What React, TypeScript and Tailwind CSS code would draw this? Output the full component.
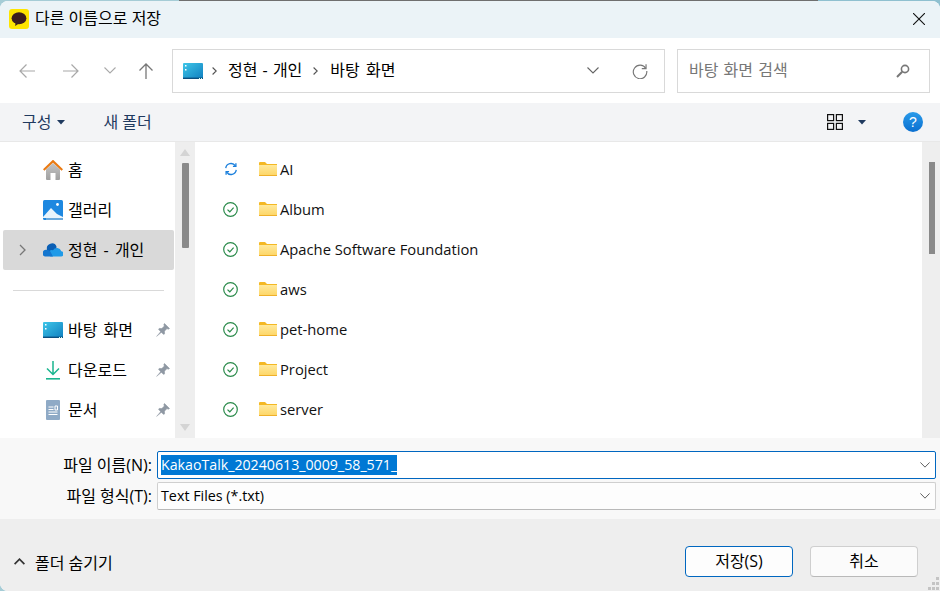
import React from "react";

const font = { fontFamily: '"Open Sans","Noto Sans CJK KR",sans-serif' };

function Kakao() {
  return (
    <svg width="20" height="20" viewBox="0 0 20 20">
      <rect width="20" height="20" rx="3" fill="#fee500" />
      <ellipse cx="10" cy="9.2" rx="7.4" ry="6" fill="#3c1e1e" />
      <path d="M6.5 13.5 L6.2 17 L10 14.5Z" fill="#3c1e1e" />
    </svg>
  );
}

function Desktop({ id }: { id: string }) {
  return (
    <svg width="20" height="16" viewBox="0 0 20 16">
      <defs>
        <linearGradient id={id} x1="0" y1="0" x2="1" y2="1">
          <stop offset="0" stopColor="#3fc6e8" />
          <stop offset="1" stopColor="#0f7fc0" />
        </linearGradient>
      </defs>
      <rect width="20" height="16" rx="1" fill={`url(#${id})`} />
      <rect y="14.6" width="20" height="1.4" fill="#0b4f80" />
      <rect x="2" y="2" width="1.5" height="1.5" fill="#fff" />
      <rect x="2" y="6" width="1.5" height="1.5" fill="#fff" />
      <rect x="16" y="15" width="1" height="1" fill="#cfe" />
      <rect x="18" y="15" width="1" height="1" fill="#cfe" />
    </svg>
  );
}

function Home() {
  return (
    <svg width="20" height="20" viewBox="0 0 20 20">
      <defs>
        <linearGradient id="hm" x1="0" y1="0" x2="0" y2="1">
          <stop offset="0" stopColor="#c4c4c4" />
          <stop offset="1" stopColor="#a0a0a0" />
        </linearGradient>
      </defs>
      <path d="M3 9.5 L10 3 L17 9.5 V19 a1 1 0 0 1-1 1 H12.5 V13 H7.5 V20 H4 a1 1 0 0 1-1-1Z" fill="url(#hm)" />
      <path d="M0.7 10 L10 1.2 L19.3 10" fill="none" stroke="#ea7a12" strokeWidth="2.2" />
    </svg>
  );
}

function Gallery() {
  return (
    <svg width="20" height="20" viewBox="0 0 20 20">
      <rect width="20" height="20" rx="1.5" fill="#1e88e0" />
      <rect x="3" y="17" width="17" height="3" fill="#6aa9dc" />
      <path d="M0 17 L8 8 L14 14 L20 17 V18 H0Z" fill="#e8f4fc" />
      <circle cx="14.5" cy="4.5" r="1.4" fill="#fff" />
    </svg>
  );
}

function Cloud() {
  return (
    <svg width="20" height="14" viewBox="0 0 20 14">
      <path d="M4 6.5 A5 5 0 0 1 13.5 3.5 L13 10 L2 9.5 A3 3 0 0 1 4 6.5Z" fill="#0b5fb5" />
      <path d="M7.5 13.5 H17.5 A2.6 2.6 0 0 0 18.3 8.2 A4.6 4.6 0 0 0 10 7.2 A3.4 3.4 0 0 0 7.5 13.5Z" fill="#1f9ae8" />
      <path d="M2 13.5 H10 L7 8 A3.5 3.5 0 0 0 4 7 A3.4 3.4 0 0 0 2 13.5Z" fill="#1476cf" />
    </svg>
  );
}

function Download() {
  return (
    <svg width="16" height="20" viewBox="0 0 16 20" fill="none">
      <path d="M8 1 V14 M2 8.5 L8 14.5 L14 8.5" stroke="#1ab58f" strokeWidth="1.5" />
      <rect x="1" y="18" width="14" height="1.6" fill="#1ab58f" />
    </svg>
  );
}

function Doc() {
  return (
    <svg width="14" height="20" viewBox="0 0 14 20">
      <rect width="14" height="20" rx="1" fill="#8faac6" />
      <path d="M2.5 7 H7.5 M2.5 9.5 H7.5 M2.5 12 H11.5 M2.5 14.5 H11.5 M9 6 H11.5 V10 H9Z" stroke="#fff" strokeWidth="1" fill="none" />
    </svg>
  );
}

function Pin() {
  return (
    <svg width="14" height="14" viewBox="0 0 14 14">
      <path d="M8.5 0.5 L13.5 5.5 L12.2 6.2 L11 5.6 L8.4 8.2 L8.6 10.8 L7.6 11.4 L2.6 6.4 L3.2 5.4 L5.8 5.6 L8.4 3 L7.8 1.8Z" fill="#8f98a3" stroke="#8f98a3" strokeWidth="0.6" />
      <path d="M5 8.2 L0.6 13.4 L5.8 9Z" fill="#8f98a3" stroke="#8f98a3" strokeWidth="0.4" />
    </svg>
  );
}

function Check() {
  return (
    <svg width="15" height="15" viewBox="0 0 15 15" fill="none">
      <circle cx="7.5" cy="7.5" r="6.8" stroke="#2a8a4a" strokeWidth="1.2" />
      <path d="M4.5 7.6 L6.8 9.8 L10.6 5.6" stroke="#2a8a4a" strokeWidth="1.2" />
    </svg>
  );
}

function Sync() {
  return (
    <svg width="14" height="14" viewBox="0 0 16 16" fill="none" stroke="#1a7fdc" strokeWidth="1.5">
      <path d="M2 7 A6 6 0 0 1 13 4.5" />
      <path d="M13.6 1.5 V5 H10.2" />
      <path d="M14 9 A6 6 0 0 1 3 11.5" />
      <path d="M2.4 14.5 V11 H5.8" />
    </svg>
  );
}

function Folder({ id }: { id: string }) {
  return (
    <svg width="18" height="14" viewBox="0 0 18 14">
      <defs>
        <linearGradient id={id} x1="0" y1="0" x2="0" y2="1">
          <stop offset="0" stopColor="#ffe99c" />
          <stop offset="1" stopColor="#fdd564" />
        </linearGradient>
      </defs>
      <path d="M0 1 a1 1 0 0 1 1-1 H6 L8 2 H18 V13 H0Z" fill="#f4b824" />
      <path d="M0 3 H18 V13 a1 1 0 0 1-1 1 H1 a1 1 0 0 1-1-1Z" fill={`url(#${id})`} />
      <rect y="13" width="18" height="1" fill="#efb02a" />
    </svg>
  );
}

function Chevron({ color = "#666", w = 12, h = 7 }: { color?: string; w?: number; h?: number }) {
  return (
    <svg width={w} height={h} viewBox="0 0 12 7" fill="none" stroke={color} strokeWidth="1.1" preserveAspectRatio="none">
      <path d="M0.5 0.5 L6 6 L11.5 0.5" />
    </svg>
  );
}

function Crumb() {
  return (
    <svg width="5" height="8" viewBox="0 0 5 8" fill="none" stroke="#555" strokeWidth="1.1">
      <path d="M0.6 0.5 L4.2 4 L0.6 7.5" />
    </svg>
  );
}

function Caret() {
  return (
    <svg width="8" height="5" viewBox="0 0 8 5">
      <path d="M0 0 H8 L4 4.5Z" fill="#1f3a5f" />
    </svg>
  );
}

function NavItem({ icon, label, pin, active, chev }: { icon: React.ReactNode; label: string; pin?: boolean; active?: boolean; chev?: boolean }) {
  return (
    <div className={`flex items-center h-10 w-[171px] ml-[3px] rounded-[2px] ${active ? "bg-[#d9d9d9]" : ""}`}>
      <div className="w-[13px] ml-[13px] flex justify-center">
        {chev && (
          <svg width="7" height="12" viewBox="0 0 7 12" fill="none" stroke="#777" strokeWidth="1.3">
            <path d="M1 1 L6 6 L1 11" />
          </svg>
        )}
      </div>
      <div className="w-5 ml-[14px] flex justify-center">{icon}</div>
      <span className="ml-[5px] text-[16px] [word-spacing:2px] text-black whitespace-nowrap flex-1">{label}</span>
      {pin && <span className="mr-[4px] flex"><Pin /></span>}
    </div>
  );
}

function FileRow({ name, sync, id }: { name: string; sync?: boolean; id: string }) {
  return (
    <div className="flex items-center h-10">
      <div className="w-[15px] ml-[28px] flex justify-center">{sync ? <Sync /> : <Check />}</div>
      <div className="ml-[21px] flex"><Folder id={id} /></div>
      <span className="ml-[3px] text-[14.75px] text-[#111]">{name}</span>
    </div>
  );
}

function ScrollArrow({ down }: { down?: boolean }) {
  return (
    <svg width="10" height="7" viewBox="0 0 10 7">
      <path d={down ? "M0 0 H10 L5 7Z" : "M0 7 H10 L5 0Z"} fill="#d4d4d4" />
    </svg>
  );
}

function Label({ text }: { text: string }) {
  return (
    <span className="w-[157px] ml-[-157px] pr-[5px] text-right text-[16px] text-black whitespace-nowrap">{text}</span>
  );
}

export default function App() {
  return (
    <div className="w-[940px] h-[591px] overflow-hidden bg-[linear-gradient(90deg,#a5ccd6_0,#a5ccd6_19%,#6f6f6f_19%,#6f6f6f_87%,#8fc0d0_87%)]" style={font}>
      <div className="relative h-[590px] mt-px rounded-t-lg rounded-bl-lg overflow-hidden flex flex-col bg-white">
        {/* Title bar */}
        <div className="h-[37px] shrink-0 bg-[#ebf3f7] flex items-center pl-[9px] pr-[15px] pb-px">
          <Kakao />
          <span className="ml-[6px] pb-[2px] text-[16px] text-black">다른 이름으로 저장</span>
          <svg className="ml-auto" width="12" height="12" viewBox="0 0 12 12" stroke="#111" strokeWidth="1.1">
            <path d="M0 0 L12 12 M12 0 L0 12" />
          </svg>
        </div>

        {/* Navigation */}
        <div className="h-[65px] shrink-0 bg-white flex items-center pl-[19px] pr-[10px]">
          <div className="flex items-center mr-[18px]">
            <svg width="16" height="16" viewBox="0 0 16 16" fill="none" stroke="#a8a8a8" strokeWidth="1.2">
              <path d="M16 8 H1 M7.5 1.5 L1 8 L7.5 14.5" />
            </svg>
            <svg className="ml-[28px]" width="16" height="16" viewBox="0 0 16 16" fill="none" stroke="#a8a8a8" strokeWidth="1.2">
              <path d="M0 8 H15 M8.5 1.5 L15 8 L8.5 14.5" />
            </svg>
            <span className="ml-[25px] flex"><Chevron color="#aaa" w={12} h={7} /></span>
            <svg className="ml-[22px]" width="16" height="16" viewBox="0 0 16 16" fill="none" stroke="#777" strokeWidth="1.3">
              <path d="M8 16 V1 M1.5 7.5 L8 1 L14.5 7.5" />
            </svg>
          </div>
          <div className="w-[493px] h-[44px] shrink-0 border border-[#d9d9d9] flex items-center pl-[10px] pr-[16px]">
            <Desktop id="d1" />
            <span className="ml-[9px] flex"><Crumb /></span>
            <span className="ml-[11px] pb-[2px] text-[16px] [word-spacing:1px] text-black">정현 - 개인</span>
            <span className="ml-[11px] flex"><Crumb /></span>
            <span className="ml-[12px] pb-[2px] text-[16px] [word-spacing:2px] text-black">바탕 화면</span>
            <span className="ml-auto flex"><Chevron color="#666" w={12} h={7} /></span>
            <svg className="ml-[33px]" width="16" height="16" viewBox="0 0 18 18" fill="none" stroke="#777" strokeWidth="1.3">
              <path d="M15.5 6 A7.6 7.6 0 1 0 16.6 9" />
              <path d="M15.8 1.5 V6.3 H11" />
            </svg>
          </div>
          <div className="ml-3 w-[253px] h-[44px] shrink-0 border border-[#d9d9d9] flex items-center pl-[11px] pr-[19px]">
            <span className="pb-[2px] text-[16px] [word-spacing:1px] text-[#777]">바탕 화면 검색</span>
            <svg className="ml-auto" width="14" height="14" viewBox="0 0 14 14" fill="none" stroke="#777">
              <circle cx="9" cy="5" r="3.6" strokeWidth="1.6" />
              <path d="M6.2 7.8 L1 13" strokeWidth="2" />
            </svg>
          </div>
        </div>

        {/* Toolbar */}
        <div className="h-[39px] shrink-0 bg-[#f3f4f6] border-b border-[#e8e8e8] flex items-center pl-[22px] pr-[17px]">
          <span className="text-[16px] text-[#1f3a5f]">구성</span>
          <span className="ml-[6px] flex"><Caret /></span>
          <span className="ml-[38px] text-[16px] text-[#1f3a5f]">새 폴더</span>
          <svg className="ml-auto" width="16" height="16" viewBox="0 0 16 16" fill="none" stroke="#111" strokeWidth="1.2">
            <rect x="0.6" y="0.6" width="6" height="6" />
            <rect x="9.4" y="0.6" width="6" height="6" />
            <rect x="0.6" y="9.4" width="6" height="6" />
            <rect x="9.4" y="9.4" width="6" height="6" />
          </svg>
          <span className="ml-[15px] flex"><Caret /></span>
          <svg className="ml-[37px]" width="20" height="20" viewBox="0 0 20 20">
            <defs>
              <linearGradient id="hlp" x1="0" y1="0" x2="0" y2="1">
                <stop offset="0" stopColor="#2a9bea" />
                <stop offset="1" stopColor="#0a6fd0" />
              </linearGradient>
            </defs>
            <circle cx="10" cy="10" r="10" fill="url(#hlp)" />
            <text x="10" y="15" textAnchor="middle" fontSize="14" fill="#fff" fontFamily="Liberation Sans">?</text>
          </svg>
        </div>

        {/* Main */}
        <div className="h-[296px] shrink-0 flex bg-white">
          <div className="w-[175px] shrink-0 pt-[8px]">
            <NavItem icon={<Home />} label="홈" />
            <NavItem icon={<Gallery />} label="갤러리" />
            <NavItem icon={<Cloud />} label="정현 - 개인" active chev />
            <div className="h-10 flex items-center ml-[13px] mr-[11px]">
              <div className="h-px w-full bg-[#d9d9d9]" />
            </div>
            <NavItem icon={<Desktop id="d2" />} label="바탕 화면" pin />
            <NavItem icon={<Download />} label="다운로드" pin />
            <NavItem icon={<Doc />} label="문서" pin />
          </div>
          <div className="w-5 shrink-0 bg-[#eeeeee] flex flex-col items-center py-[7px]">
            <ScrollArrow />
            <div className="w-[7px] h-[85px] mt-[7px] bg-[#8a8a8a] rounded-[1px]" />
            <div className="flex-1" />
            <ScrollArrow down />
          </div>
          <div className="flex-1 pt-[7px] overflow-hidden">
            <FileRow id="f1" name="AI" sync />
            <FileRow id="f2" name="Album" />
            <FileRow id="f3" name="Apache Software Foundation" />
            <FileRow id="f4" name="aws" />
            <FileRow id="f5" name="pet-home" />
            <FileRow id="f6" name="Project" />
            <FileRow id="f7" name="server" />
          </div>
          <div className="w-[18px] shrink-0 bg-[#eeeeee] flex justify-center pl-px pt-[20px]">
            <div className="w-[6px] h-[92px] bg-[#8a8a8a]" />
          </div>
        </div>

        {/* Form */}
        <div className="h-[81px] shrink-0 bg-[#f8f8f8] flex flex-col gap-[3px] pt-[13px] pl-[157px] pr-[4px]">
          <div className="flex items-center h-[28px]">
            <Label text="파일 이름(N):" />
            <div className="flex-1 h-[28px] bg-white border border-[#0067c0] rounded-[2px] flex items-center pl-[3px] pr-[5px]">
              <span className="text-[14.2px] bg-[#0078d4] text-white leading-[20px] whitespace-nowrap">KakaoTalk_20240613_0009_58_571_</span>
              <span className="ml-auto flex"><Chevron color="#555" w={10} h={6} /></span>
            </div>
          </div>
          <div className="flex items-center h-[28px]">
            <Label text="파일 형식(T):" />
            <div className="flex-1 h-[28px] bg-[#fdfdfd] border border-[#cfcfcf] border-b-[#b9b9b9] rounded-[2px] flex items-center pl-[3px] pr-[5px]">
              <span className="text-[14.3px] text-black">Text Files (*.txt)</span>
              <span className="ml-auto flex"><Chevron color="#555" w={10} h={6} /></span>
            </div>
          </div>
        </div>

        {/* Footer */}
        <div className="flex-1 bg-[#eeeeee] flex items-end pb-[14px] pl-[14px] pr-[22px]">
          <div className="flex items-center h-[31px]">
            <svg width="11" height="7" viewBox="0 0 11 7" fill="none" stroke="#333" strokeWidth="1.7">
              <path d="M0.6 6.2 L5.5 1.2 L10.4 6.2" />
            </svg>
            <span className="ml-[10px] pt-[2px] text-[16px] text-black">폴더 숨기기</span>
          </div>
          <button className="ml-auto w-[108px] h-[31px] pb-px rounded-[4px] border border-[#0067c0] bg-[#fdfdfd] text-[16px] text-black">저장(S)</button>
          <button className="ml-[17px] w-[108px] h-[31px] pb-px rounded-[4px] border border-[#cfcfcf] border-b-[#b9b9b9] bg-[#fbfbfb] text-[16px] text-black">취소</button>
        </div>

        {/* Size grip */}
        <svg className="absolute right-0 bottom-0" width="12" height="14" viewBox="0 0 12 14" fill="#c4c4c4">
          <rect x="8" y="0" width="3" height="3" />
          <rect x="4" y="5" width="3" height="3" />
          <rect x="8" y="5" width="3" height="3" />
          <rect x="0" y="10" width="3" height="3" />
          <rect x="4" y="10" width="3" height="3" />
          <rect x="8" y="10" width="3" height="3" />
        </svg>
      </div>
    </div>
  );
}
